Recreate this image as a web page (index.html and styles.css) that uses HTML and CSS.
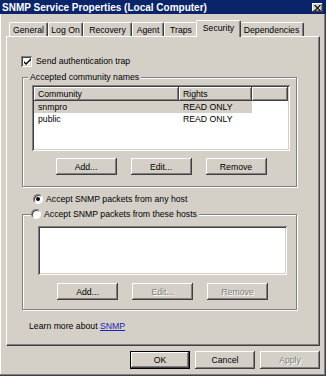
FILE: index.html
```html
<!DOCTYPE html>
<html lang="en">
<head>
  <meta charset="UTF-8">
  <title>SNMP Service Properties (Local Computer)</title>
  <link rel="stylesheet" href="styles.css">
</head>
<body>
  <div class="window">
    <div class="titlebar">
      <span class="title">SNMP Service Properties (Local Computer)</span>
      <span class="close">
        <svg width="7" height="6" viewBox="0 0 7 6"><path d="M0 0h1.5l2 2.2 2-2.2H7L4.3 3 7 6H5.5l-2-2.2-2 2.2H0l2.7-3z" fill="#000"/></svg>
      </span>
    </div>

    <div class="frame">
      <div class="tabs">
        <div class="tab t-general">General</div>
        <div class="tab t-logon">Log On</div>
        <div class="tab t-recovery">Recovery</div>
        <div class="tab t-agent">Agent</div>
        <div class="tab t-traps">Traps</div>
        <div class="tab t-security active">Security</div>
        <div class="tab t-deps">Dependencies</div>
      </div>

      <div class="panel">
        <label class="check-row">
          <span class="checkbox">
            <svg width="7" height="7" viewBox="0 0 7 7"><path d="M0 3l2 2 5-5v2L2 7 0 5z" fill="#000"/></svg>
          </span>
          Send authentication trap
        </label>

        <fieldset class="group community">
          <legend>Accepted community names</legend>
          <div class="listview">
            <div class="lv-head">
              <span class="col-c">Community</span>
              <span class="col-r">Rights</span>
              <span class="col-rest"></span>
            </div>
            <div class="lv-row selected"><span class="col-c">snmpro</span><span class="col-r">READ ONLY</span></div>
            <div class="lv-row"><span class="col-c">public</span><span class="col-r">READ ONLY</span></div>
          </div>
          <div class="btn-row">
            <button class="btn">Add...</button>
            <button class="btn">Edit...</button>
            <button class="btn">Remove</button>
          </div>
        </fieldset>

        <label class="radio-row">
          <span class="radio on"></span>
          Accept SNMP packets from any host
        </label>

        <fieldset class="group hosts">
          <legend>
            <label class="radio-row"><span class="radio"></span>Accept SNMP packets from these hosts</label>
          </legend>
          <div class="listbox"></div>
          <div class="btn-row">
            <button class="btn">Add...</button>
            <button class="btn" disabled>Edit...</button>
            <button class="btn" disabled>Remove</button>
          </div>
        </fieldset>

        <p class="learn">Learn more about <a href="#">SNMP</a></p>
      </div>

      <div class="footer">
        <button class="btn default">OK</button>
        <button class="btn">Cancel</button>
        <button class="btn" disabled>Apply</button>
      </div>
    </div>
  </div>
</body>
</html>
```

FILE: styles.css
```css
body {
  margin: 0;
  font-family: "Liberation Sans", Arial, sans-serif;
  font-size: 8.7px;
  color: #000;
  background: #d4d0c8;
}
.window {
  width: 326px;
  height: 376px;
  box-sizing: border-box;
  background: #d4d0c8;
  box-shadow: inset -1px -1px #404040, inset -2px -2px #808080, inset 1px 0 #fff;
  overflow: hidden;
}
.titlebar {
  height: 14px;
  background: #0a246a;
  display: flex;
  align-items: center;
  justify-content: space-between;
  padding: 0 3px 0 2px;
}
.title {
  color: #fff;
  font-weight: bold;
  font-size: 10px;
}
.close {
  width: 11px;
  height: 9px;
  margin-top: 1px;
  background: #d4d0c8;
  box-shadow: inset -1px -1px #404040, inset 1px 1px #fff, inset -2px -2px #808080;
  display: flex;
  align-items: center;
  justify-content: center;
}
.close svg { display: block; }

.frame {
  padding: 0 6px;
}

/* tabs */
.tabs {
  display: flex;
  align-items: flex-end;
  height: 22px;
  padding-left: 3px;
}
.tab {
  height: 14px;
  line-height: 15px;
  box-sizing: border-box;
  text-align: center;
  border-top: 1px solid #fff;
  border-left: 1px solid #fff;
  border-right: 1px solid #404040;
  box-shadow: inset -1px 0 #808080;
  border-radius: 2px 2px 0 0;
  white-space: nowrap;
}
.t-general { width: 39px; }
.t-logon { width: 35px; }
.t-recovery { width: 49px; }
.t-agent { width: 32px; }
.t-traps { width: 34px; }
.t-security { width: 42px; }
.t-deps { width: 65px; }
.tab.active {
  position: relative;
  z-index: 1;
  height: 17px;
  line-height: 15px;
  margin: 0 -2px -1px;
  width: 45px;
  background: #d4d0c8;
}

/* panel */
.panel {
  height: 310px;
  box-sizing: border-box;
  border-top: 1px solid #fff;
  border-left: 1px solid #fff;
  border-right: 1px solid #404040;
  border-bottom: 1px solid #404040;
  box-shadow: inset -1px -1px #808080;
  padding: 18px 0 0 14px;
}

.check-row, .radio-row {
  display: flex;
  align-items: center;
  height: 12px;
  white-space: nowrap;
}
.checkbox {
  width: 11px;
  height: 11px;
  box-sizing: border-box;
  background: #fff;
  box-shadow: inset 1px 1px #808080, inset -1px -1px #fff, inset 2px 2px #404040, inset -2px -2px #d4d0c8;
  display: flex;
  align-items: center;
  justify-content: center;
  margin-right: 4px;
}
.checkbox svg { display: block; margin-left: 1px; }

.radio {
  width: 10px;
  height: 10px;
  box-sizing: border-box;
  border-radius: 50%;
  background: #fff;
  border: 1px solid;
  border-color: #808080 #fff #fff #808080;
  box-shadow: inset 1px 1px #404040;
  margin-right: 3px;
  position: relative;
}
.radio.on::after {
  content: "";
  position: absolute;
  left: 2px;
  top: 2px;
  width: 4px;
  height: 4px;
  border-radius: 50%;
  background: #000;
}

/* group boxes */
.group {
  margin: 5px 22px 0 1px;
  border: 1px solid #808080;
  box-shadow: inset 1px 1px #fff, 1px 1px #fff;
  min-width: 0;
}
.group legend {
  padding: 0 2px;
  line-height: 11px;
  background: #d4d0c8;
}
.community {
  padding: 2px 6px 11px 9px;
}
.community legend {
  margin-left: -4px;
}
.hosts {
  margin-top: 3px;
  padding: 6px 9px 9px 15px;
}
.hosts legend {
  margin-left: -7px;
  padding: 0 2px 0 0;
}
.hosts legend .radio-row {
  height: 12px;
}

.listview {
  height: 66px;
  box-sizing: border-box;
  background: #fff;
  box-shadow: inset 1px 1px #808080, inset -1px -1px #fff, inset 2px 2px #404040, inset -2px -2px #d4d0c8;
  padding: 2px;
}
.lv-head {
  display: flex;
  height: 14px;
}
.lv-head span {
  box-sizing: border-box;
  background: #d4d0c8;
  box-shadow: inset -1px -1px #404040, inset 1px 1px #fff, inset -2px -2px #808080;
  line-height: 14px;
  padding-left: 4px;
}
.col-c { width: 145px; }
.col-r { width: 73px; }
.col-rest { flex: 1; }
.lv-row {
  display: flex;
  height: 12px;
  line-height: 12px;
}
.lv-row span {
  box-sizing: border-box;
  padding-left: 4px;
}
.lv-row.selected span {
  background: #d4d0c8;
}

.listbox {
  height: 49px;
  background: #fff;
  box-shadow: inset 1px 1px #808080, inset -1px -1px #fff, inset 2px 2px #404040, inset -2px -2px #d4d0c8;
}

/* buttons */
.btn-row {
  display: flex;
  justify-content: center;
  gap: 14px;
  margin-top: 7px;
}
.hosts .btn-row {
  margin-top: 8px;
}
.btn {
  width: 61px;
  height: 17px;
  padding: 0;
  border: none;
  background: #d4d0c8;
  font: inherit;
  color: #000;
  box-shadow: inset -1px -1px #404040, inset 1px 1px #fff, inset -2px -2px #808080;
}
.btn:disabled {
  color: #808080;
  text-shadow: 1px 1px #fff;
}
.btn.default {
  outline: 1px solid #000;
  outline-offset: -1px;
  box-shadow: inset -2px -2px #404040, inset 2px 2px #fff, inset -3px -3px #808080;
}

.panel > .radio-row {
  margin: 6px 0 0 12px;
}

.learn {
  margin: 11px 0 0 8px;
  line-height: 11px;
}
.learn a {
  color: #2222bb;
}

.footer {
  display: flex;
  justify-content: flex-end;
  gap: 5px;
  margin-top: 5px;
}
.footer .btn {
  width: 60px;
  height: 18px;
}
```
